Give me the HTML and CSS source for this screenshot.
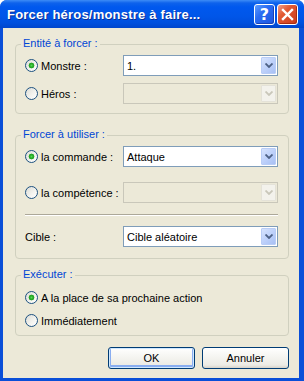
FILE: index.html
```html
<!DOCTYPE html>
<html lang="fr">
<head>
  <meta charset="UTF-8">
  <title>Forcer héros/monstre à faire...</title>
  <link rel="stylesheet" href="styles.css">
</head>
<body>
  <div class="window">
    <div class="titlebar">
      <span class="title">Forcer héros/monstre à faire...</span>
      <span class="tb-btn help">?</span>
      <span class="tb-btn close">
        <svg width="13" height="13" viewBox="0 0 13 13"><path d="M2 2 L11 11 M11 2 L2 11" stroke="#fff" stroke-width="2.4" stroke-linecap="square"/></svg>
      </span>
    </div>

    <div class="client">
      <div class="group g1">
        <span class="group-title">Entité à forcer :</span>
        <div class="row">
          <label class="opt"><span class="radio on"></span>Monstre :</label>
          <div class="combo"><span class="combo-text">1.</span><span class="combo-btn"><svg width="8" height="5" viewBox="0 0 8 5"><path d="M0.5 0.5 L4 4 L7.5 0.5" fill="none" stroke="currentColor" stroke-width="1.8"/></svg></span></div>
        </div>
        <div class="row gap7">
          <label class="opt"><span class="radio"></span>Héros :</label>
          <div class="combo disabled"><span class="combo-text"></span><span class="combo-btn"><svg width="8" height="5" viewBox="0 0 8 5"><path d="M0.5 0.5 L4 4 L7.5 0.5" fill="none" stroke="currentColor" stroke-width="1.8"/></svg></span></div>
        </div>
      </div>

      <div class="group g2">
        <span class="group-title">Forcer à utiliser :</span>
        <div class="row">
          <label class="opt"><span class="radio on"></span>la commande :</label>
          <div class="combo"><span class="combo-text">Attaque</span><span class="combo-btn"><svg width="8" height="5" viewBox="0 0 8 5"><path d="M0.5 0.5 L4 4 L7.5 0.5" fill="none" stroke="currentColor" stroke-width="1.8"/></svg></span></div>
        </div>
        <div class="row gap15">
          <label class="opt"><span class="radio"></span>la compétence :</label>
          <div class="combo disabled"><span class="combo-text"></span><span class="combo-btn"><svg width="8" height="5" viewBox="0 0 8 5"><path d="M0.5 0.5 L4 4 L7.5 0.5" fill="none" stroke="currentColor" stroke-width="1.8"/></svg></span></div>
        </div>
        <div class="separator"></div>
        <div class="row">
          <span class="opt plain">Cible :</span>
          <div class="combo"><span class="combo-text">Cible aléatoire</span><span class="combo-btn"><svg width="8" height="5" viewBox="0 0 8 5"><path d="M0.5 0.5 L4 4 L7.5 0.5" fill="none" stroke="currentColor" stroke-width="1.8"/></svg></span></div>
        </div>
      </div>

      <div class="group g3">
        <span class="group-title">Exécuter :</span>
        <div class="radio-row"><span class="radio on"></span>A la place de sa prochaine action</div>
        <div class="radio-row second"><span class="radio"></span>Immédiatement</div>
      </div>

      <div class="buttons">
        <button class="btn default">OK</button>
        <button class="btn">Annuler</button>
      </div>
    </div>
  </div>
</body>
</html>
```

FILE: styles.css
```css
body {
  margin: 0;
  padding: 0;
  background: #fff;
  font-family: 'Liberation Sans', Arial, sans-serif;
  font-size: 11px;
  color: #000;
}

.window {
  width: 304px;
  height: 381px;
  box-sizing: border-box;
  border-radius: 7px 7px 0 0;
  background: #0a4fd8;
  padding: 0 5px 3px 3px;
  display: flex;
  flex-direction: column;
}

.titlebar {
  height: 28px;
  margin: 0 -5px 0 -3px;
  padding: 0 6px 0 7px;
  border-radius: 7px 7px 0 0;
  background: linear-gradient(#3d8cf6 0, #0e62ec 3px, #0058ee 7px, #0056e9 16px, #0050de 23px, #0046cc 28px);
  display: flex;
  align-items: center;
}

.title {
  flex: 1;
  color: #fff;
  font-weight: bold;
  font-size: 13px;
  letter-spacing: 0.2px;
  text-shadow: 1px 1px 0 #0b2f96;
  padding-top: 1px;
}

.tb-btn {
  width: 19px;
  height: 19px;
  border: 1px solid #fff;
  border-radius: 3px;
  display: flex;
  align-items: center;
  justify-content: center;
  margin-left: 2px;
  margin-top: 1px;
}

.help {
  background: linear-gradient(135deg, #5c9bff 0, #2a6cf2 40%, #1d55de 100%);
  color: #fff;
  font-weight: bold;
  font-size: 16px;
  font-family: 'DejaVu Sans', sans-serif;
  box-shadow: inset -1px -1px 0 #1741b8;
}

.close {
  background: linear-gradient(135deg, #f0a08a 0, #e25a34 35%, #c8391a 100%);
  box-shadow: inset -1px -1px 0 #a92c12;
}

.client {
  flex: 1;
  background: #ece9d8;
  padding: 0 10px 0 12px;
}

.group {
  position: relative;
  border: 1px solid #d0d0bf;
  border-radius: 4px;
  padding: 10px 10px 9px 9px;
}

.group-title {
  position: absolute;
  top: -8px;
  left: 5px;
  padding: 0 2px;
  line-height: 13px;
  background: #ece9d8;
  color: #0046d5;
}

.g1 { margin-top: 16px; }
.g2 { margin-top: 21px; padding-bottom: 11px; }
.g3 { margin-top: 16px; padding: 13px 10px 6px 9px; }

.row {
  display: flex;
  align-items: center;
  height: 21px;
}

.gap7 { margin-top: 7px; }
.gap15 { margin-top: 15px; }

.opt {
  width: 98px;
  display: flex;
  align-items: center;
}

.radio {
  width: 13px;
  height: 13px;
  box-sizing: border-box;
  border: 1px solid #1c5180;
  border-radius: 50%;
  background: linear-gradient(135deg, #dcdcd6 0, #f4f4f0 60%, #fff 100%);
  margin-right: 3px;
  flex: none;
}

.radio.on {
  background:
    radial-gradient(circle at 50% 50%, #55d855 0, #2cb02c 1.5px, #21a121 2.6px, rgba(33,161,33,0) 3.2px),
    linear-gradient(135deg, #dcdcd6 0, #f4f4f0 60%, #fff 100%);
}

.combo {
  flex: 1;
  height: 21px;
  box-sizing: border-box;
  border: 1px solid #7f9db9;
  background: #fff;
  display: flex;
  align-items: center;
}

.combo-text {
  flex: 1;
  padding-left: 3px;
}

.combo-btn {
  width: 15px;
  height: 17px;
  margin-right: 1px;
  box-sizing: border-box;
  border: 1px solid #b9cdf6;
  border-radius: 1px;
  background: linear-gradient(135deg, #d6e3fd 0, #bed1fa 50%, #a8c0f4 100%);
  color: #4d6185;
  display: flex;
  align-items: center;
  justify-content: center;
}

.combo.disabled {
  border-color: #c9c7ba;
  background: #ece9d8;
}

.combo.disabled .combo-btn {
  border-color: #e4e2d8;
  background: #f3f2ec;
  color: #c9c7ba;
}

.separator {
  margin-top: 11px;
  margin-bottom: 10px;
  border-top: 1px solid #aca899;
  border-bottom: 1px solid #fff;
}

.radio-row {
  display: flex;
  align-items: center;
  height: 17px;
}

.radio-row.second { margin-top: 6px; }

.buttons {
  display: flex;
  justify-content: flex-end;
  gap: 7px;
  margin-top: 11px;
}

.btn {
  width: 87px;
  height: 22px;
  border: 1px solid #003c74;
  border-radius: 3px;
  background: linear-gradient(#ffffff 0, #f6f6f2 40%, #ecebe5 85%, #d8d3c9 100%);
  font-family: 'Liberation Sans', Arial, sans-serif;
  font-size: 11px;
  color: #000;
  padding: 0;
}

.btn.default {
  box-shadow: inset 0 0 0 1px #cee7ff, inset 0 -1px 0 2px #89adf0;
}
```
